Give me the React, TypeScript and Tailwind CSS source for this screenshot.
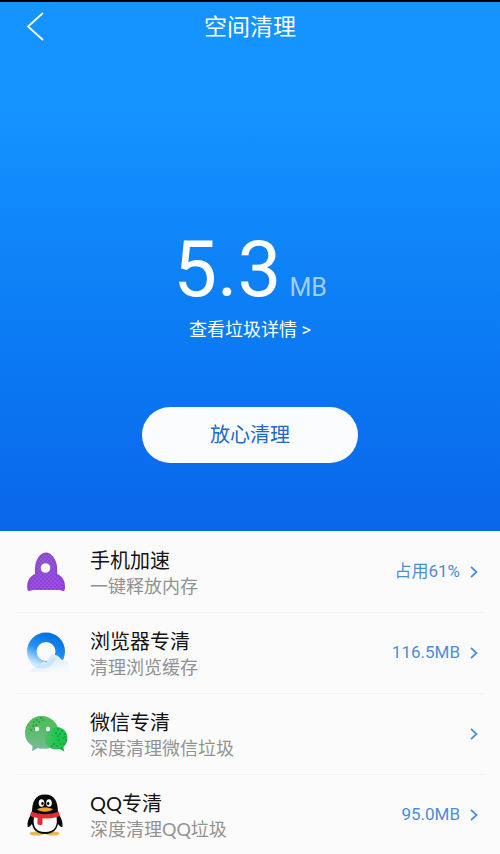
import type { ReactNode } from "react";

function RocketIcon() {
  return (
    <svg viewBox="0 0 44 44" className="size-11" aria-hidden="true">
      <defs>
        <linearGradient id="rocket" x1="0" y1="0" x2="0.3" y2="1">
          <stop offset="0" stopColor="#8350c4" />
          <stop offset="1" stopColor="#9140dc" />
        </linearGradient>
        <pattern id="rocket-dots" width="4" height="4" patternUnits="userSpaceOnUse">
          <circle cx="1" cy="1" r="0.6" fill="#b98aee" />
          <circle cx="3" cy="3" r="0.6" fill="#b98aee" />
        </pattern>
      </defs>
      <g fillRule="evenodd">
        <path fill="url(#rocket)" d="M22 2.500c5 0 10 6 11 13.500.3 3 .3 5 .2 8 4.500 2 7.800 6 7.800 12.500 0 2.500-.3 4.500-1.600 4.500-1.500 0-2.500-1-4.500-1H9.500c-2 0-3 1-4.500 1s-1.800-2-1.800-4.500c0-6.500 3.300-10.500 7.800-12.500-.1-3-.1-5 .2-8C12 8.500 17 2.500 22 2.500Zm-.5 10.700a4.800 4.800 0 1 0 0 9.600 4.800 4.800 0 0 0 0-9.600Z" />
        <path fill="url(#rocket-dots)" d="M22 4c4 0 8.500 5 9.500 12.500.3 3 .2 5.500.1 9 4 2.500 6.400 5 6.400 11.500V40H6v-3c0-6.500 2.400-9 6.400-11.500-.1-3.500-.2-6 .1-9C13.500 9 18 4 22 4Zm-.5 9.200a4.800 4.800 0 1 0 0 9.600 4.800 4.800 0 0 0 0-9.600Z" />
      </g>
    </svg>
  );
}

function BrowserIcon() {
  return (
    <svg viewBox="0 0 44 44" className="size-11 overflow-visible" aria-hidden="true">
      <defs>
        <linearGradient id="ring" x1="0.7" y1="0" x2="0.25" y2="1">
          <stop offset="0" stopColor="#0874e4" />
          <stop offset="0.5" stopColor="#2592f2" />
          <stop offset="1" stopColor="#cfe9fd" />
        </linearGradient>
        <linearGradient id="cloud" x1="0" y1="0" x2="0.6" y2="1">
          <stop offset="0" stopColor="#cbe2f6" />
          <stop offset="1" stopColor="#f6fafd" />
        </linearGradient>
      </defs>
      <circle cx="22" cy="20.500" r="14.200" fill="none" stroke="url(#ring)" strokeWidth="9.500" />
      <path d="M5 41c2-4 7-4 9-4 2-6 6-7 9-5 1-8 8-11 13-5l2 2c5-1 8 3 8 8v4Z" fill="url(#cloud)" />
      <path d="M13 36c3-4 7-4 10-3 2-5 5-7 9-6-2 4-4 8-9 10-4 1-7 1-10-1Z" fill="#bfdcf5" opacity="0.6" />
    </svg>
  );
}

const speckles = [
  [10, 10], [13, 8], [17, 6], [15, 10], [9, 14], [12, 13], [19, 8], [7, 18], [11, 17],
  [34, 17], [38, 19], [41, 22], [36, 22], [32, 21], [39, 26], [42, 28], [35, 28],
  [30, 32], [33, 34], [37, 32], [40, 32], [28, 34], [38, 36], [41, 25], [34, 24],
];

function WeChatIcon() {
  return (
    <svg viewBox="0 0 44 44" className="size-11" aria-hidden="true">
      <defs>
        <linearGradient id="bubble" x1="0" y1="0" x2="0" y2="1">
          <stop offset="0.3" stopColor="#50bd5e" />
          <stop offset="1" stopColor="#7eb9a0" />
        </linearGradient>
        <linearGradient id="reply" x1="0" y1="0" x2="0.5" y2="0">
          <stop offset="0" stopColor="#50bd68" />
          <stop offset="1" stopColor="#20c54e" />
        </linearGradient>
      </defs>
      <path fill="url(#bubble)" d="M17.500 4C8.500 4 1 11.500 1 21c0 6 3 10 7.500 13L8 39l6-3c4 1.500 10 1 14-1 6-3 8-8 7-15C34 11 27 4 17.500 4Z" />
      <path fill="url(#reply)" d="M33 15c6 0 10.500 5 10.500 11 0 4-1.500 6.500-4 9l.8 4.500-5-2.500c-4 .7-8 .2-11-2-6-5-4-18 8.700-20Z" />
      <g fill="#17682f">
        {speckles.map(([x, y]) => <circle key={`${x}-${y}`} cx={x} cy={y} r="0.7" />)}
      </g>
      <circle cx="13" cy="17" r="2.200" fill="#fff" />
      <circle cx="24" cy="17" r="2.200" fill="#fff" />
    </svg>
  );
}

function PenguinIcon() {
  return (
    <svg viewBox="0 0 44 44" className="size-11" aria-hidden="true">
      <ellipse cx="12.500" cy="40.500" rx="7" ry="2" fill="#e8b84c" />
      <ellipse cx="28.500" cy="40.500" rx="7" ry="2" fill="#e8b84c" />
      <path fill="#080808" d="M8 20C5 24 3 29 3.500 33.500c1 1.500 3-.5 4.500-2.500 1 5 4 9.500 13 10 9-.5 12-5 13-10 1.500 2 3.500 4 4.500 2.500C39 29 37 24 34 20 34 9 31 1.500 21 1.500S8 9 8 20Z" />
      <path fill="#fff" d="M10 24h22.500c1.500 9-2 15-11.500 15S8.500 33 10 24Z" />
      <path fill="#e22d32" d="M7.500 18.500c8 3.500 19 3.500 27 0 1 2 1.500 3 1 4.500-5 2-11 2.800-17 2.500V31c0 1.500-4 1.500-5 0v-6c-3-.6-5-1-7-2-.5-1.500 0-3 1-4.500Z" />
      <ellipse cx="17.500" cy="10" rx="2.800" ry="3.800" fill="#fff" />
      <ellipse cx="25" cy="10" rx="2.800" ry="3.800" fill="#fff" />
      <ellipse cx="18.500" cy="10.500" rx="1.200" ry="1.700" fill="#080808" />
      <ellipse cx="24.200" cy="10.500" rx="1.200" ry="1.700" fill="#080808" />
      <path fill="#e7a52f" d="M13 16.300c4-2.500 12-2.500 16 0-3 3.200-13 3.200-16 0Z" />
    </svg>
  );
}

function Chevron() {
  return (
    <svg viewBox="0 0 8 12" className="h-3 w-2" fill="none" stroke="#4a8ed6" strokeWidth="1.800" aria-hidden="true">
      <path d="M1 .8 6.500 6 1 11.200" />
    </svg>
  );
}

type Entry = { icon: ReactNode; title: string; detail: string; value?: string };

const entries: Entry[] = [
  { icon: <RocketIcon />, title: "手机加速", detail: "一键释放内存", value: "占用61%" },
  { icon: <BrowserIcon />, title: "浏览器专清", detail: "清理浏览缓存", value: "116.5MB" },
  { icon: <WeChatIcon />, title: "微信专清", detail: "深度清理微信垃圾" },
  { icon: <PenguinIcon />, title: "QQ专清", detail: "深度清理QQ垃圾", value: "95.0MB" },
];

export default function App() {
  return (
    <div className="min-h-screen border-t-2 border-black bg-[#fbfbfc] font-['Lato','Noto_Sans_CJK_SC',sans-serif]">
      <section className="bg-linear-to-b from-[#1593ff] from-20% to-[#0a66ea] pb-17 text-white">
        <header className="grid grid-cols-[1fr_auto_1fr] items-center px-6">
          <button type="button" aria-label="返回" className="flex h-12 w-6 items-center">
            <svg viewBox="0 0 24 32" className="h-8 w-6" fill="none" stroke="currentColor" strokeWidth="1.800" aria-hidden="true">
              <path d="M19 3 4 16.500 19 30" />
            </svg>
          </button>
          <h1 className="text-[23px] leading-12">空间清理</h1>
        </header>

        <div className="flex flex-col items-center pt-45 font-['Roboto','Noto_Sans_CJK_SC',sans-serif]">
          <p className="flex items-baseline gap-2">
            <span className="text-[78px] leading-20">5.3</span>
            <span className="text-[25px] leading-8 text-[#a4cdfc]">MB</span>
          </p>
          <button type="button" className="mt-2 text-lg leading-6">查看垃圾详情 &gt;</button>
          <button type="button" className="mt-[65px] h-14 w-54 rounded-full bg-[#fbfcfd] text-xl text-[#2168c8]">
            放心清理
          </button>
        </div>
      </section>

      <ul className="px-4 pt-px">
        {entries.map((entry) => (
          <li key={entry.title} className="border-b border-[#f3f3f4] last:border-b-0">
            <button type="button" className="flex h-20 w-full items-center pr-1.5 pl-2 text-left">
              {entry.icon}
              <span className="ml-5.5 flex flex-1 flex-col pt-1">
                <span className="text-xl leading-6 text-[#141414]">{entry.title}</span>
                <span className="text-lg leading-7 text-[#929292]">{entry.detail}</span>
              </span>
              <span className="flex items-center gap-2.5 font-['Roboto','Noto_Sans_CJK_SC',sans-serif] text-[17px] text-[#4a8ed6]">
                {entry.value}
                <Chevron />
              </span>
            </button>
          </li>
        ))}
      </ul>
    </div>
  );
}
